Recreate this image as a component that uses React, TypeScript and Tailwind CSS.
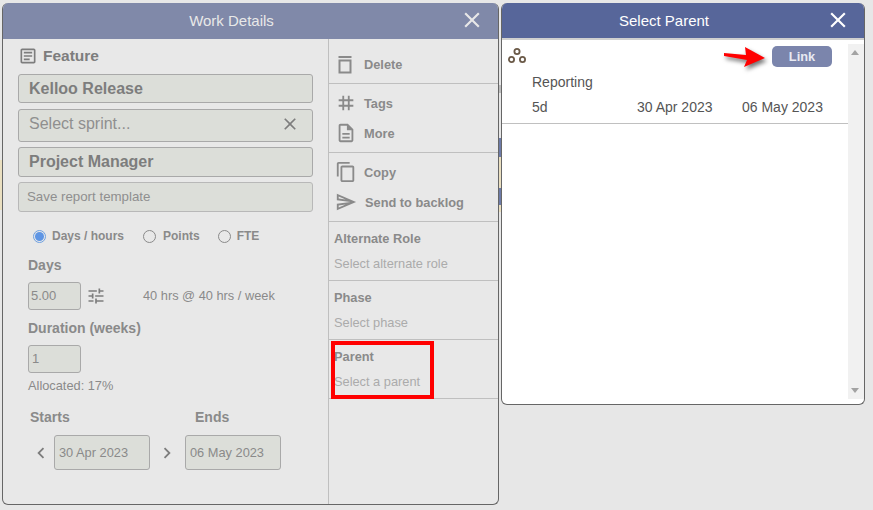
import React from "react";
import { MdClose, MdOutlineContentCopy, MdOutlineDescription, MdOutlineSend, MdOutlineTune, MdTag, MdOutlineArticle, MdChevronLeft, MdChevronRight } from "react-icons/md";

const rows = "flex items-center";

function Field({ className, children }: { className: string; children: React.ReactNode }) {
  return (
    <div className={`flex items-center rounded-[3px] border border-[#a9a9a9] bg-[#dcded9] ${className}`}>
      {children}
    </div>
  );
}

function Radio({ on }: { on?: boolean }) {
  return on ? (
    <span className="flex h-[13px] w-[13px] shrink-0 items-center justify-center rounded-full border border-[#6ea0e0] bg-[#e8e8e8]">
      <span className="h-[9px] w-[9px] rounded-full bg-[#5e95e4]" />
    </span>
  ) : (
    <span className="block h-[13px] w-[13px] shrink-0 rounded-full border border-[#8a8a8a] bg-[#e8e8e8]" />
  );
}

function Section({ title, hint }: { title: string; hint: string }) {
  return (
    <div className="h-[59px] border-b border-[#bfbfbf] pl-[5px] pt-[9px]">
      <div className="text-[12.8px] font-bold leading-[16px] text-[#8a8a8a]">{title}</div>
      <div className="mt-[9px] text-[12.8px] leading-[16px] text-[#ababab]">{hint}</div>
    </div>
  );
}

function Action({ icon, label, h, x = 35 }: { icon: React.ReactNode; label: string; h: number; x?: number }) {
  return (
    <div className={`${rows} relative pt-[1px] text-[12.8px] font-bold text-[#8a8a8a]`} style={{ height: h, paddingLeft: x }}>
      <span className="absolute left-[6px] top-1/2 -translate-y-1/2">{icon}</span>
      {label}
    </div>
  );
}

export default function App() {
  return (
    <div
      className="flex h-[510px] w-[873px] items-start overflow-hidden bg-[#e7e7e7] pt-[3px] text-[#8a8a8a]"
      style={{ fontFamily: '"Liberation Sans", Arial, sans-serif' }}
    >
      <div className="w-[2px] shrink-0">
        <div className="mt-[157px] h-[50px] bg-[#eadfc0]" />
      </div>
      <section className="flex h-[502px] w-[497px] shrink-0 flex-col overflow-hidden rounded-[6px] border border-l-[1px] border-t-0 border-[#666] bg-[#e8e8e8]">
        <header className="relative flex h-[36px] shrink-0 items-center justify-center bg-[#8089a9] pr-[38px] text-[15px] text-[#e8e8e8]">
          Work Details
          <MdClose className="absolute right-[13px] top-[4px] h-[26px] w-[26px] text-[#e8e8e8]" />
        </header>
        <div className="flex min-h-0 flex-1">
          <div className="w-[326px] shrink-0 border-r border-[#bfbfbf] pl-[15px] pr-[15px]">
            <div className={`${rows} mt-[9px] h-[16px] gap-[5px] text-[15.5px] font-bold leading-none text-[#7d7d7d]`}>
              <MdOutlineArticle className="h-[20px] w-[20px]" />
              Feature
            </div>
            <Field className="mt-[10px] h-[29px] pl-[10px] text-[16px] font-bold text-[#7d7d7d]">Kelloo Release</Field>
            <Field className="mt-[6px] h-[33px] justify-between pb-[3px] pl-[10px] pr-[12px] text-[16px] text-[#8f8f8f]">
              Select sprint...
              <MdClose className="h-[20px] w-[20px] text-[#7d7d7d]" />
            </Field>
            <Field className="mt-[5px] h-[30px] pl-[10px] text-[16px] font-bold text-[#7d7d7d]">Project Manager</Field>
            <Field className="mt-[5px] h-[30px] border-[#b8b8b8] pl-[8px] text-[13.3px] text-[#8f8f8f]">Save report template</Field>

            <div className={`${rows} mt-[16px] h-[16px] pl-[15px] text-[12px] font-bold`}>
              <Radio on />
              <span className="ml-[6px]">Days / hours</span>
              <span className="ml-[19px] block"><Radio /></span>
              <span className="ml-[7px]">Points</span>
              <span className="ml-[18px] block"><Radio /></span>
              <span className="ml-[6px]">FTE</span>
            </div>

            <div className="mt-[13px] pl-[10px] text-[14px] font-bold leading-[16px]">Days</div>
            <div className={`${rows} mt-[9px] pl-[10px]`}>
              <Field className="h-[28px] w-[53px] pl-[2px] text-[13px]">5.00</Field>
              <MdOutlineTune className="ml-[5px] h-[20px] w-[20px] text-[#7d7d7d]" />
              <span className="ml-[37px] text-[12.8px]">40 hrs @ 40 hrs / week</span>
            </div>
            <div className="mt-[10px] pl-[10px] text-[14px] font-bold leading-[16px]">Duration (weeks)</div>
            <div className="mt-[9px] pl-[10px]">
              <Field className="h-[28px] w-[53px] pl-[3px] text-[13px]">1</Field>
            </div>
            <div className="mt-[5px] pl-[10px] text-[12.8px] leading-[16px]">Allocated: 17%</div>
            <div className={`${rows} mt-[15px] pl-[12px] text-[14px] font-bold leading-[16px]`}>
              <span className="w-[165px]">Starts</span>
              <span>Ends</span>
            </div>
            <div className={`${rows} mt-[10px] pl-[12px]`}>
              <MdChevronLeft className="h-[22px] w-[22px] text-[#7d7d7d]" />
              <Field className="ml-[2px] h-[35px] w-[96px] pl-[4px] text-[12.8px]">30 Apr 2023</Field>
              <MdChevronRight className="ml-[6px] h-[22px] w-[22px] text-[#7d7d7d]" />
              <Field className="ml-[7px] h-[35px] w-[96px] pl-[4px] text-[12.8px]">06 May 2023</Field>
            </div>
          </div>

          <div className="min-w-0 flex-1">
            <div className="border-b border-[#bfbfbf] pt-[7px]">
              <Action
                h={37}
                label="Delete"
                icon={
                  <svg width="20" height="20" viewBox="0 0 20 20" fill="none" stroke="#8a8a8a" strokeWidth="2">
                    <path d="M3.5 2h13" />
                    <path d="M4.5 5.5h11v12h-11z" />
                  </svg>
                }
              />
            </div>
            <div className="border-b border-[#bfbfbf] py-[4px]">
              <Action h={30} label="Tags" icon={<MdTag className="h-[22px] w-[22px]" />} />
              <Action h={30} label="More" icon={<MdOutlineDescription className="h-[22px] w-[22px]" />} />
            </div>
            <div className="border-b border-[#bfbfbf] py-[4px]">
              <Action h={30} label="Copy" icon={<MdOutlineContentCopy className="h-[22px] w-[22px]" />} />
              <Action h={30} x={36} label="Send to backlog" icon={<MdOutlineSend className="h-[22px] w-[22px]" />} />
            </div>
            <Section title="Alternate Role" hint="Select alternate role" />
            <Section title="Phase" hint="Select phase" />
            <div className="relative">
              <Section title="Parent" hint="Select a parent" />
              <div className="absolute left-[2px] top-[1px] h-[58px] w-[103px] border-4 border-[#ff0000]" />
            </div>
          </div>
        </div>
      </section>

      <div className="w-[2px] shrink-0">
        <div className="mt-[82px] h-[8px] bg-[#bcbcbc]" />
        <div className="mt-[45px] h-[19px] bg-[#6d7ba8]" />
        <div className="h-[31px] bg-[#eadfc0]" />
        <div className="h-[17px] bg-[#6d7ba8]" />
        <div className="h-[7px] bg-[#eadfc0]" />
      </div>

      <section className="relative flex h-[402px] w-[364px] shrink-0 flex-col overflow-hidden rounded-[6px] border border-t-0 border-[#666] bg-white">
        <header className="relative flex h-[35px] shrink-0 items-center justify-center bg-[#57669a] pr-[38px] pt-[2px] text-[15px] text-white">
          Select Parent
          <MdClose className="absolute right-[13px] top-[4px] h-[26px] w-[26px] text-white" />
        </header>
        <div className="flex min-h-0 flex-1 border-t-2 border-[#d0d0d0]">
          <div className="min-w-0 flex-1">
            <div className="border-b border-[#c0c0c0] pb-[5px] text-[14px] text-[#555]">
              <div className="relative h-[31px]">
                <svg className="absolute left-[6px] top-[7px]" width="18" height="17" viewBox="0 0 18 17" fill="none" stroke="#6b5a48" strokeWidth="1.8">
                  <circle cx="9" cy="4.5" r="2.6" />
                  <circle cx="3.5" cy="12.5" r="2.6" />
                  <circle cx="14.5" cy="12.5" r="2.6" />
                </svg>
                <button className="absolute left-[270px] top-[6px] h-[21px] w-[60px] rounded-[5px] bg-[#7b85ac] text-[12.8px] font-bold text-[#e8eaf2]">
                  Link
                </button>
                <svg className="absolute left-[219px] top-[5px] overflow-visible drop-shadow-[2px_3px_2px_rgba(0,0,0,0.55)]" width="46" height="26" viewBox="0 0 46 26">
                  <path d="M3 8 L25 10 L24 2 L44 13 L23 22 L26 15 L3 11z" fill="#ff0000" />
                </svg>
              </div>
              <div className="pl-[30px] leading-[22px]">Reporting</div>
              <div className="mt-[3px] flex pl-[30px] leading-[22px]">
                <span className="w-[105px]">5d</span>
                <span className="w-[105px]">30 Apr 2023</span>
                <span>06 May 2023</span>
              </div>
            </div>
          </div>
          <div className="relative mb-[5px] mt-[4px] w-[16px] shrink-0 bg-[#f1f1f1]">
            <span className="absolute left-[3px] top-[6px] h-0 w-0 border-x-[4px] border-b-[5px] border-x-transparent border-b-[#a3a3a3]" />
            <span className="absolute bottom-[6px] left-[3px] h-0 w-0 border-x-[4px] border-t-[5px] border-x-transparent border-t-[#a3a3a3]" />
          </div>
        </div>
      </section>
    </div>
  );
}
